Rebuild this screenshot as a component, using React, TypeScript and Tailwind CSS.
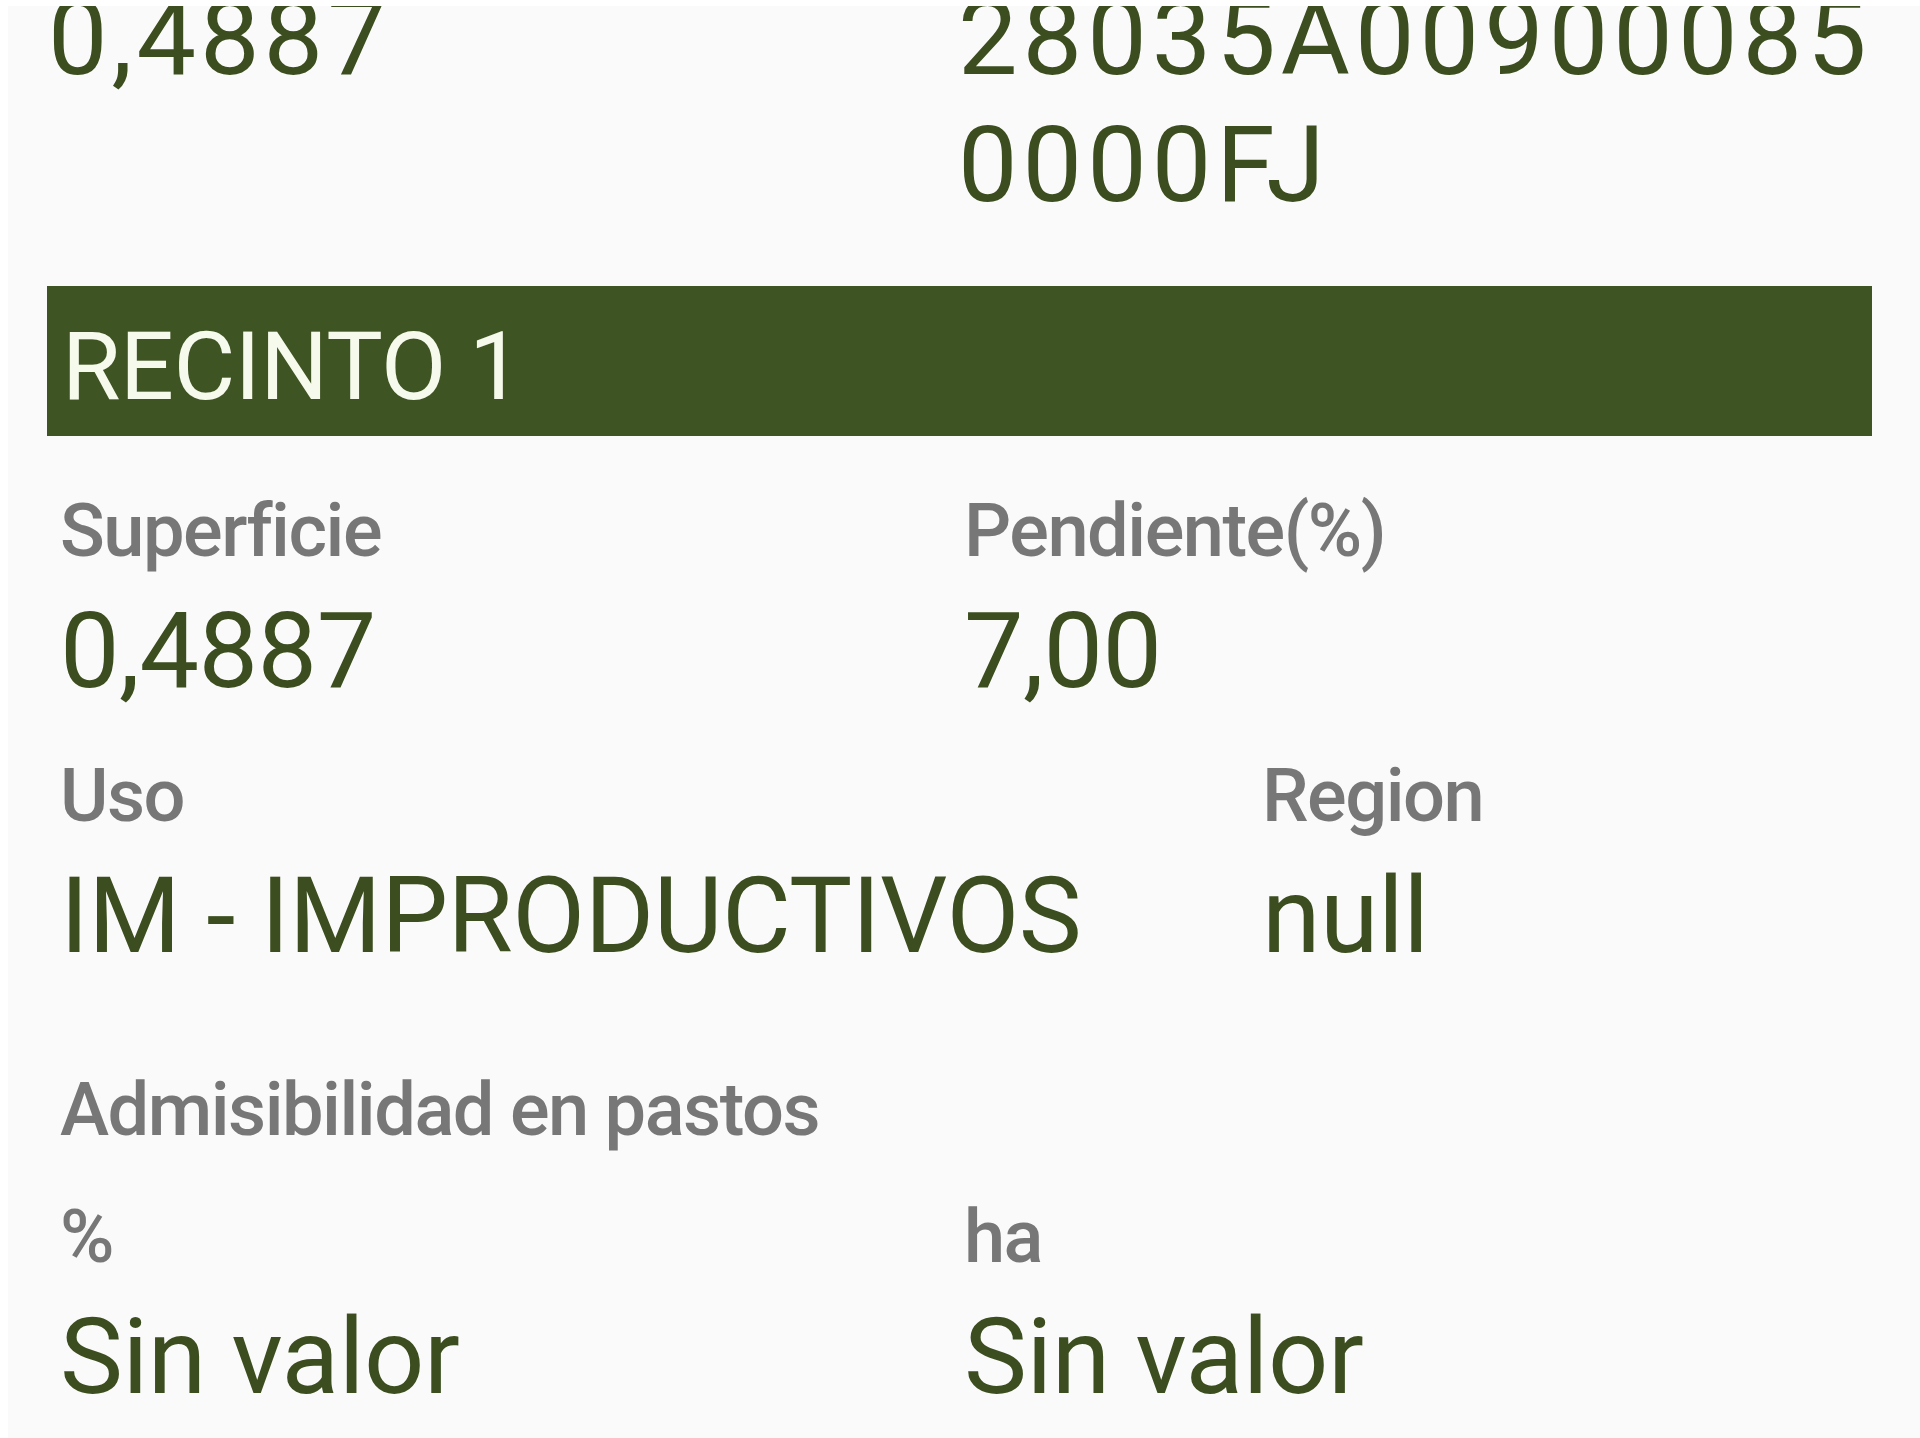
import React from 'react';

// ─── Datos ───────────────────────────────────────────────────────────────────
const FONT = "font-['Roboto','Noto_Sans',sans-serif]";

interface FieldProps {
  label: string;
  value: string;
}

function Field({ label, value }: FieldProps) {
  return (
    <div className="flex flex-col gap-[12px]">
      <span className="text-[74px] leading-[90px] font-medium tracking-[-1.5px] text-[#777777]">{label}</span>
      <span className="text-[106px] leading-[127px] tracking-[-0.5px] text-[#3c4e1f]">{value}</span>
    </div>
  );
}

export default function App() {
  return (
    <div className={`${FONT} w-[1920px] h-[1438px] overflow-hidden bg-[#fafafa] border-t-[6px] border-l-[8px] border-white`}>
      {/* ── Fila superior (recortada por el scroll) ── */}
      <div className="-mt-[31px] grid grid-cols-[910px_1fr] pl-[40px]">
        <span className="text-[106px] leading-[127px] tracking-[4px] text-[#3c4e1f]">0,4887</span>
        <span className="text-[106px] leading-[127px] tracking-[5px] text-[#3c4e1f] break-all pr-[30px]">
          28035A009000850000FJ
        </span>
      </div>

      {/* ── Cabecera del recinto ── */}
      <div className="mt-[57px] ml-[39px] w-[1825px] h-[150px] bg-[#3f5423] pl-[15px] pt-[12px]">
        <span className="text-[95px] leading-[138px] tracking-[-0.5px] text-[#f6faec]">RECINTO 1</span>
      </div>

      {/* ── Datos del recinto ── */}
      <div className="pl-[52px] pt-[50px] flex flex-col">
        <div className="grid grid-cols-[904px_1fr]">
          <Field label="Superficie" value="0,4887" />
          <Field label="Pendiente(%)" value="7,00" />
        </div>

        <div className="mt-[36px] grid grid-cols-[1202px_1fr]">
          <Field label="Uso" value="IM - IMPRODUCTIVOS" />
          <Field label="Region" value="null" />
        </div>

        <span className="mt-[85px] text-[74px] leading-[90px] font-medium tracking-[-1.5px] text-[#777777]">
          Admisibilidad en pastos
        </span>

        <div className="mt-[37px] grid grid-cols-[904px_1fr]">
          <Field label="%" value="Sin valor" />
          <Field label="ha" value="Sin valor" />
        </div>
      </div>
    </div>
  );
}
